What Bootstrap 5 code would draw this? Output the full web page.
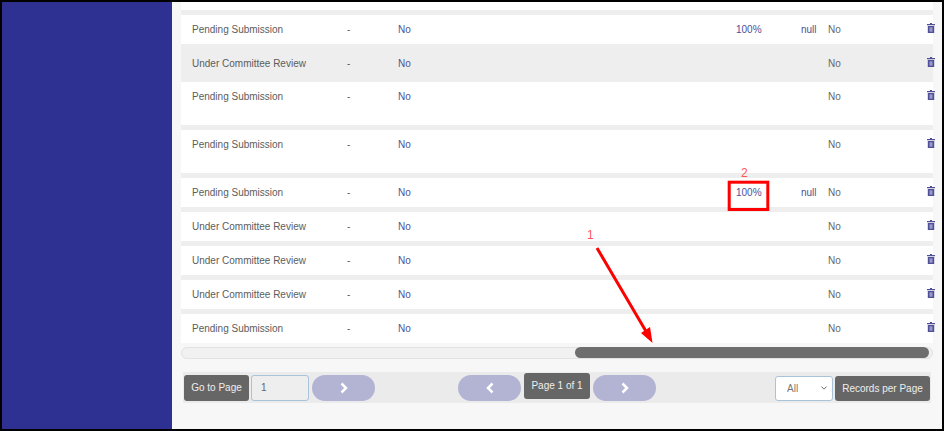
<!doctype html>
<html lang="en"><head><meta charset="utf-8"><title>Records</title>
<link href="https://cdn.jsdelivr.net/npm/bootstrap@5.3.0/dist/css/bootstrap.min.css" rel="stylesheet">
<style>
html,body{height:100%;overflow:hidden}
body{background:#000;font-family:"Liberation Sans",Arial,sans-serif;font-size:10px;color:#5c5c5c}
.shell{height:431px;padding:2px;position:relative}
.side-panel{width:170px;background:#2e3191;flex:none}
.main-panel{background:#f7f7f7;padding:0 9px;min-width:0}
.rows-area{background:#fff;padding-top:8px}
.rec-table{width:100%;table-layout:fixed;border-collapse:separate;border-spacing:0;margin:0}
.rec-table td{padding:8px 0 0;vertical-align:top;line-height:13px;border-top:5px solid #eee;height:34px;background:#fff}
.rec-table tr.tall td{height:48px}
.rec-table tr.shade td{background:#eee;border-top:0;height:38px;padding-top:13px}
.rec-table tr.shade + tr td{border-top:0;height:43px}
.rec-table .c0{width:11px}.rec-table .c1{width:155px}.rec-table .c2{width:51px}.rec-table .c3{width:338px}
.rec-table .c4{width:65px}.rec-table .c5{width:27px}.rec-table .c6{width:99px}
.ink{color:#4f5098}
.ghost{color:#666}
.trash{display:block}
.sbar{height:12px;margin-top:4px;border-radius:6px;background:#f1f1f1;border:1px solid #e2e2e2;padding:0 3px 0 0;display:flex;justify-content:flex-end}
.sthumb{width:354px;background:#6e6e6e;border-radius:6px;margin:-1px 0 0}
.pager{margin:13px 2px 0;height:31px;background:#ebebeb;padding:0 1px;display:flex;align-items:center}
.pg-btn{background:#666;color:#eee;border:0;border-radius:3px;font-size:10px;padding:0;height:26px;line-height:26px;text-align:center}
.pg-btn:hover{background:#666;color:#eee}
.goto{width:65px}.pageof{width:66px;margin-top:-2px}.perpage{width:95px;height:25px;line-height:25px;margin-top:1px}
.pg-input{width:58px;height:26px;border:1px solid #a9c4d8;border-radius:3px;background:#eee;color:#666;font-size:10px;padding:0 9px;margin-left:2px}
.pill{width:63px;height:26px;border:0;border-radius:13px;background:#b3b3d4;color:#fff;padding:0;display:flex;align-items:center;justify-content:center}
.pill-low{margin:1px 0 0 3px}
.pg-mid{margin-left:83px;gap:3px}
.rec-select{width:58px;height:25px;border:1px solid #a9c4d8;border-radius:3px;background-color:#fff;color:#777;font-size:10px;padding:0 0 0 11px;margin-right:2px;margin-top:1px;background-size:8px 6px;background-position:right 4px center}
.overlay{position:absolute;left:0;top:0;pointer-events:none}
.mark-label{font-family:"Liberation Sans",Arial,sans-serif;font-size:12px;fill:#f55}
</style></head><body>
<div class="shell d-flex">
<aside class="side-panel"></aside>
<main class="main-panel flex-grow-1">
<div class="rows-area">
<table class="rec-table"><colgroup><col class="c0"><col class="c1"><col class="c2"><col class="c3"><col class="c4"><col class="c5"><col class="c6"><col></colgroup>
<tbody id="rows"></tbody></table>
</div>
<div class="sbar"><div class="sthumb"></div></div>
<div class="pager">
<button class="btn pg-btn goto">Go to Page</button>
<input class="pg-input" value="1" aria-label="Go to page">
<button class="btn pill pill-low" aria-label="Go"><svg width="10" height="12" viewBox="0 0 10 12"><path d="M2.500 1.500 7 6l-4.500 4.500" fill="none" stroke="#fff" stroke-width="2.500"/></svg></button>
<div class="flex-grow-1 d-flex pg-mid">
<button class="btn pill" aria-label="Previous"><svg width="10" height="12" viewBox="0 0 10 12"><path d="M7.500 1.500 3 6l4.500 4.500" fill="none" stroke="#fff" stroke-width="2.500"/></svg></button>
<button class="btn pg-btn pageof">Page 1 of 1</button>
<button class="btn pill" aria-label="Next"><svg width="10" height="12" viewBox="0 0 10 12"><path d="M2.500 1.500 7 6l-4.500 4.500" fill="none" stroke="#fff" stroke-width="2.500"/></svg></button>
</div>
<select class="form-select rec-select" aria-label="Records per page"><option>All</option></select>
<button class="btn pg-btn perpage">Records per Page</button>
</div>
</main>
</div>
<svg class="overlay" width="944" height="431">
<text class="mark-label" x="587" y="239">1</text>
<text class="mark-label" x="741" y="177">2</text>
<rect x="729.200" y="182.200" width="38.600" height="27.300" fill="none" stroke="#f00" stroke-width="3"/>
<path d="M597 248 647 333" stroke="#f00" stroke-width="3" fill="none"/>
<path d="M652.500 343 641 333 650 327z" fill="#f00"/>
</svg>
<script>
var T='<svg class="trash" width="8" height="10" viewBox="0 0 8 10"><path d="M3 0h2v1h3v1.200H0V1h3zM.8 3h6.400v7H.8z" fill="#4f5098"/><path d="M2.500 4.300h3v4.400h-3z" fill="#9a9ac8"/></svg>';
var S='Pending Submission',U='Under Committee Review';
var d=[[S,1,'single'],[U,0,'shade'],[S,0,'tall'],[S,0,'tall'],[S,1,'single'],[U,0,'single'],[U,0,'single'],[U,0,'single'],[S,0,'single']];
document.getElementById('rows').innerHTML=d.map(function(r){
return '<tr class="'+r[2]+'"><td></td><td>'+r[0]+'</td><td>-</td><td class="ink">No</td><td class="ink">'+(r[1]?'100%':'')+'</td><td class="ink">'+(r[1]?'null':'')+'</td><td class="ghost">No</td><td>'+T+'</td></tr>';
}).join('');
</script>
<script src="https://cdn.jsdelivr.net/npm/bootstrap@5.3.0/dist/js/bootstrap.bundle.min.js"></script>
</body></html>
